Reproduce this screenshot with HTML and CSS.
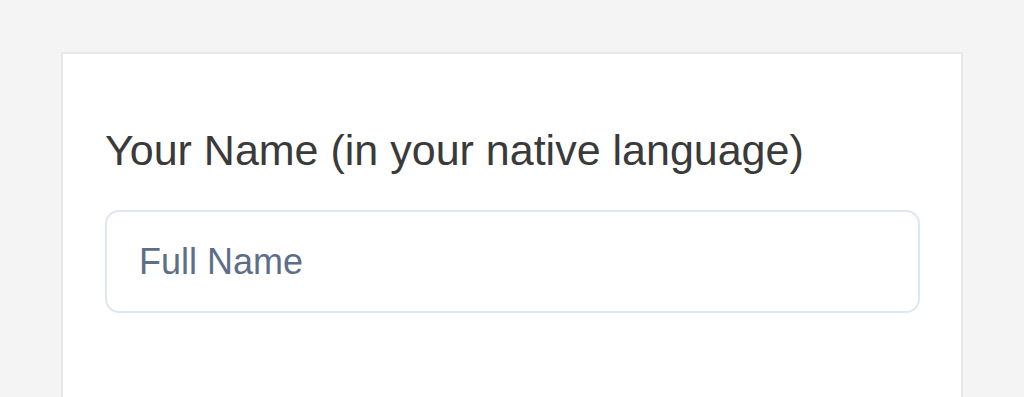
FILE: index.html
```html
<!DOCTYPE html>
<html>
<head>
<meta charset="utf-8">
<link rel="stylesheet" href="styles.css">
</head>
<body>
<div class="card">
  <label class="label" for="name">Your Name (in your native language)</label>
  <input class="input" id="name" type="text" placeholder="Full Name">
</div>
</body>
</html>
```
FILE: styles.css
```css
html, body {
  margin: 0;
  padding: 0;
  background: #f4f4f4;
  height: 100%;
  overflow: hidden;
}
body {
  padding: 52px 0 0 61px;
  box-sizing: border-box;
  font-family: "Liberation Sans", Arial, sans-serif;
}
.card {
  width: 902px;
  height: 345px;
  box-sizing: border-box;
  background: #fff;
  border: 2px solid #e8e8e8;
  border-bottom: none;
  padding: 72px 42px 0 42px;
  display: flex;
  flex-direction: column;
}
.label {
  display: block;
  font-size: 43px;
  line-height: 48px;
  color: #3a3a3a;
  margin-bottom: 36px;
}
.input {
  box-sizing: border-box;
  width: 815px;
  height: 103px;
  border: 2px solid #dfe7f0;
  border-radius: 14px;
  padding: 0 32px;
  font-family: inherit;
  font-size: 36px;
  color: #333;
  outline: none;
}
.input::placeholder {
  color: #5d6f88;
}
```
